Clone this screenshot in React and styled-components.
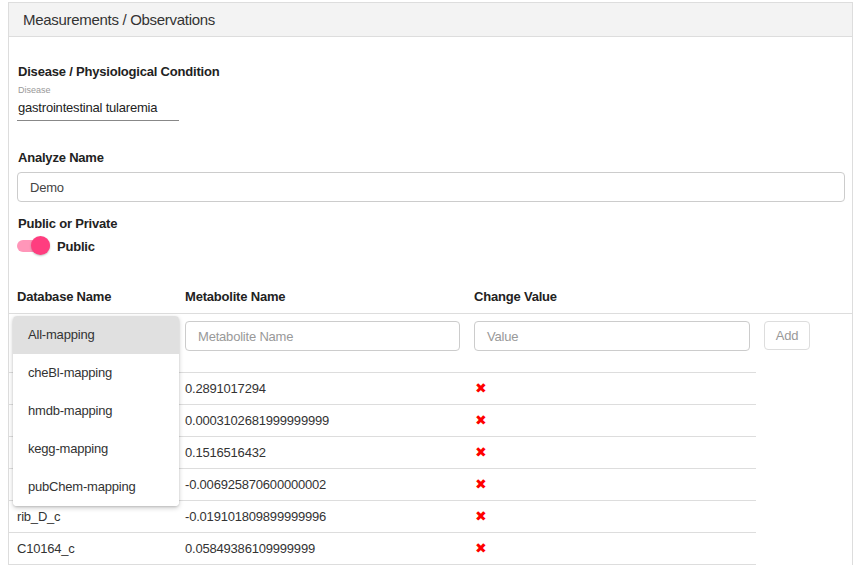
import React from "react"
import styled, { createGlobalStyle } from "styled-components"

const GlobalStyle = createGlobalStyle`
  html, body {
    margin: 0;
    padding: 0;
    background: #ffffff;
  }
  body {
    font-family: "Liberation Sans", Arial, sans-serif;
    font-size: 13px;
    letter-spacing: -0.2px;
    color: #333333;
  }
  * {
    box-sizing: border-box;
  }
`

const databases = [
  "All-mapping",
  "cheBl-mapping",
  "hmdb-mapping",
  "kegg-mapping",
  "pubChem-mapping",
]

// first four names sit under the open menu
const rows = [
  { id: 1, name: "", value: "0.2891017294" },
  { id: 2, name: "", value: "0.0003102681999999999" },
  { id: 3, name: "", value: "0.1516516432" },
  { id: 4, name: "", value: "-0.006925870600000002" },
  { id: 5, name: "rib_D_c", value: "-0.019101809899999996" },
  { id: 6, name: "C10164_c", value: "0.05849386109999999" },
]

export default function App() {
  return (
    <>
      <GlobalStyle />
      <Page>
        <Card>
          <Header>Measurements / Observations</Header>
          <Body>
            <Field>
              <Label>Disease / Physiological Condition</Label>
              <Underlined>
                <SmallLabel>Disease</SmallLabel>
                <UnderlinedValue>gastrointestinal tularemia</UnderlinedValue>
              </Underlined>
            </Field>
            <Field $gap={28}>
              <Label>Analyze Name</Label>
              <TextBox>Demo</TextBox>
            </Field>
            <Field $gap={13}>
              <Label>Public or Private</Label>
              <SwitchRow>
                <Track>
                  <Thumb />
                </Track>
                <SwitchText>Public</SwitchText>
              </SwitchRow>
            </Field>
          </Body>
          <Table>
            <HeadCell>Database Name</HeadCell>
            <HeadCell>Metabolite Name</HeadCell>
            <HeadCell>Change Value</HeadCell>
            <HeadCell />

            <InputCell>
              <Menu>
                {databases.map((d, i) => (
                  <MenuItem key={d} $active={i === 0}>
                    {d}
                  </MenuItem>
                ))}
              </Menu>
            </InputCell>
            <InputCell>
              <Input>Metabolite Name</Input>
            </InputCell>
            <InputCell>
              <Input>Value</Input>
            </InputCell>
            <InputCell $last>
              <AddButton>Add</AddButton>
            </InputCell>

            {rows.map((r) => (
              <React.Fragment key={r.id}>
                <Cell>{r.name}</Cell>
                <Cell>{r.value}</Cell>
                <Cell>
                  <Remove>✖</Remove>
                </Cell>
                <Cell $last />
              </React.Fragment>
            ))}
          </Table>
        </Card>
      </Page>
    </>
  )
}

const Page = styled.div`
  padding: 2px 14px 0 8px;
  width: 867px;
`

const Card = styled.div`
  border: 1px solid #dddddd;
  border-bottom: none;
  background: #ffffff;
`

const Header = styled.div`
  height: 34px;
  padding: 0 14px;
  display: flex;
  align-items: center;
  background: #f3f3f3;
  border-bottom: 1px solid #dddddd;
  font-size: 15px;
  letter-spacing: -0.3px;
  color: #333333;
`

const Body = styled.div`
  padding: 26px 7px 0 8px;
  display: flex;
  flex-direction: column;
`

const Field = styled.div`
  display: flex;
  flex-direction: column;
  margin-top: ${(p) => p.$gap || 0}px;
`

const Label = styled.div`
  font-weight: bold;
  font-size: 13px;
  line-height: 18px;
  color: #222222;
  padding-left: 1px;
`

const Underlined = styled.div`
  width: 162px;
  border-bottom: 1px solid #888888;
  padding: 4px 0 5px 1px;
`

const SmallLabel = styled.div`
  font-size: 9px;
  line-height: 10px;
  letter-spacing: 0;
  color: #999999;
`

const UnderlinedValue = styled.div`
  margin-top: 6px;
  font-size: 13px;
  line-height: 14px;
  color: #222222;
`

const TextBox = styled.div`
  margin-top: 5px;
  height: 30px;
  border: 1px solid #cccccc;
  border-radius: 4px;
  padding: 0 12px;
  display: flex;
  align-items: center;
  color: #444444;
`

const SwitchRow = styled.div`
  display: flex;
  align-items: center;
  gap: 7px;
  height: 26px;
`

const Track = styled.div`
  position: relative;
  width: 33px;
  height: 12px;
  border-radius: 7px;
  background: #ff96b9;
`

const Thumb = styled.div`
  position: absolute;
  right: 0;
  top: -4px;
  width: 19px;
  height: 19px;
  border-radius: 50%;
  background: #ff3d7f;
  box-shadow: 0 1px 2px rgba(0, 0, 0, 0.25);
`

const SwitchText = styled.div`
  font-weight: bold;
  color: #222222;
`

const Table = styled.div`
  display: grid;
  grid-template-columns: 168px 289px 290px 1fr;
  margin-top: 22px;
`

const HeadCell = styled.div`
  height: 33px;
  padding: 0 8px 1px 8px;
  display: flex;
  align-items: center;
  font-weight: bold;
  color: #222222;
  border-bottom: 1px solid #dddddd;
`

const InputCell = styled.div`
  position: relative;
  height: 59px;
  padding: 7px 6px 0 8px;
  border-bottom: ${(p) => (p.$last ? "none" : "1px solid #dddddd")};
`

const Input = styled.div`
  height: 30px;
  border: 1px solid #cccccc;
  border-radius: 4px;
  padding: 0 12px;
  display: flex;
  align-items: center;
  color: #999999;
`

const AddButton = styled.div`
  width: 46px;
  height: 29px;
  border: 1px solid #dddddd;
  border-radius: 4px;
  display: flex;
  align-items: center;
  justify-content: center;
  color: #999999;
  font-size: 13px;
`

const Menu = styled.div`
  position: absolute;
  left: 4px;
  top: 2px;
  width: 166px;
  z-index: 2;
  background: #ffffff;
  border-radius: 4px;
  box-shadow: 0 2px 5px rgba(0, 0, 0, 0.2), 0 1px 2px rgba(0, 0, 0, 0.12);
  overflow: hidden;
`

const MenuItem = styled.div`
  height: 38px;
  padding: 0 15px 2px 15px;
  display: flex;
  align-items: center;
  background: ${(p) => (p.$active ? "#e0e0e0" : "#ffffff")};
  color: #333333;
`

const Cell = styled.div`
  height: 32px;
  padding: 0 8px 1px 8px;
  display: flex;
  align-items: center;
  color: #333333;
  border-bottom: ${(p) => (p.$last ? "none" : "1px solid #dddddd")};
`

const Remove = styled.span`
  font-family: "DejaVu Sans", sans-serif;
  color: #ff0000;
  font-size: 14px;
  padding-left: 1px;
`
